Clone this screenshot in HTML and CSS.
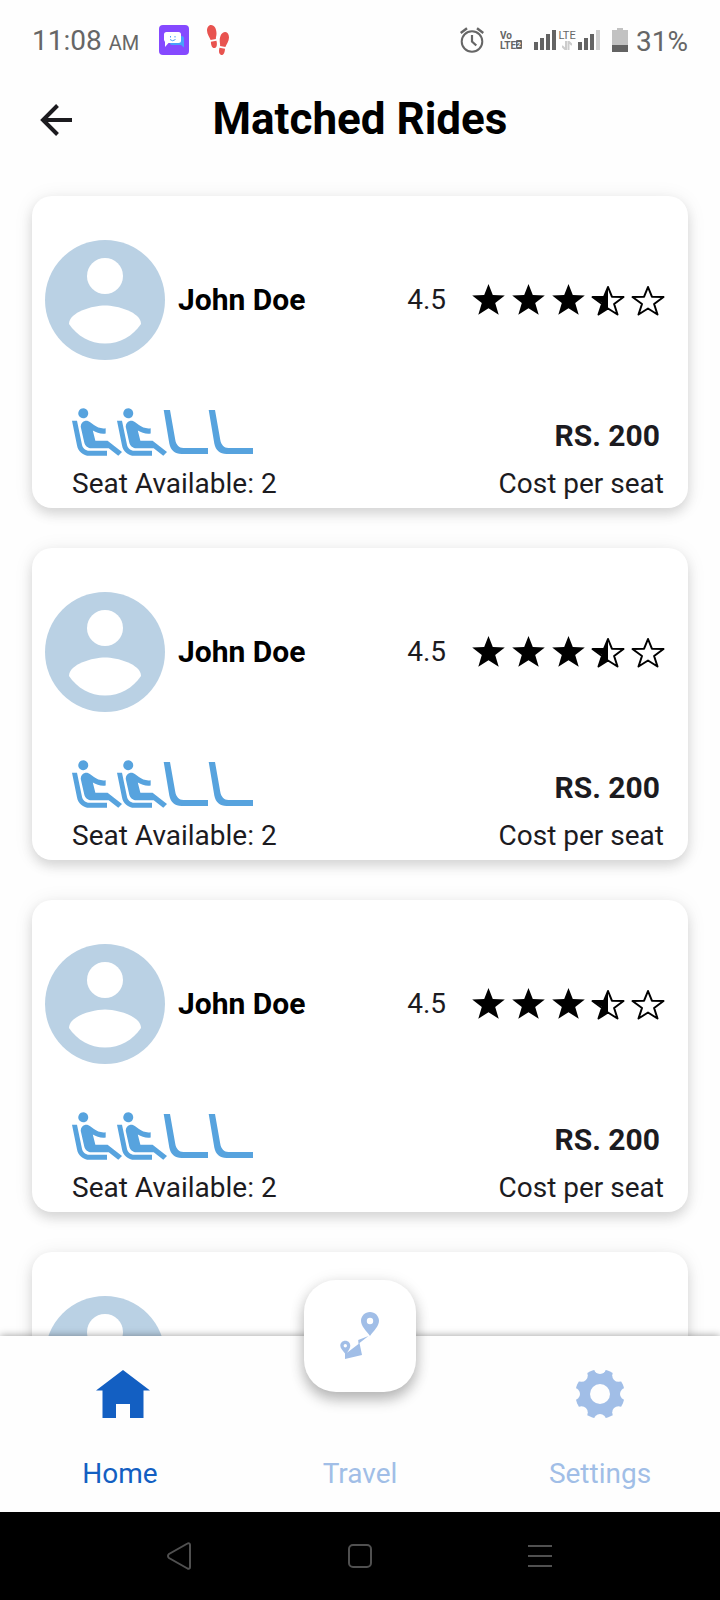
FILE: index.html
```
<!DOCTYPE html>
<html lang="en">
<head>
<meta charset="utf-8">
<meta name="viewport" content="width=device-width, initial-scale=1">
<title>Matched Rides</title>
<link rel="stylesheet" href="styles.css">
</head>
<body>
<svg class="defs" aria-hidden="true">
  <symbol id="avatar" viewBox="0 0 120 120">
    <circle class="avatar-bg" cx="60" cy="60" r="60"/>
    <circle class="avatar-fg" cx="60" cy="36" r="18"/>
    <path class="avatar-fg" d="M60 65.500c12 0 36 6.500 36 18.500-8 12-21 19.500-36 19.500S32 96 24 84C24 72 48 65.500 60 65.500z"/>
  </symbol>
  <symbol id="star" viewBox="0 0 40 40">
    <path d="M20.500 4l4.300 11 12 .4-9.600 7.600 3.500 11.700-10.200-6.400-10.200 6.400L13.800 23 4.200 15.400l12-.4z"/>
  </symbol>
  <symbol id="star-half" viewBox="0 0 40 40">
    <path d="M20 7v21.500L10.500 34.500 14 23 4.500 17l11.600-.3z"/>
    <path class="star-line" d="M20 7l3.900 9.700L35.500 17l-9.400 7 3.400 10.500L20 28.500 10.500 34.500 14 24 4.500 17l11.600-.3z"/>
  </symbol>
  <symbol id="star-empty" viewBox="0 0 40 40">
    <path class="star-line" d="M20 7l3.900 9.700L35.500 17l-9.400 7 3.400 10.500L20 28.500 10.500 34.500 14 24 4.500 17l11.600-.3z"/>
  </symbol>
  <symbol id="seat-taken" viewBox="2 2 20 19">
    <path d="M5.350 5.640c-.9-.64-1.120-1.880-.49-2.790.63-.9 1.880-1.120 2.790-.49.9.64 1.120 1.880.49 2.790-.64.9-1.880 1.120-2.790.49zM16 19H8.930c-1.480 0-2.740-1.080-2.960-2.540L4 7H2l1.990 9.760C4.370 19.200 6.470 21 8.940 21H16v-2zm.23-4h-4.880l-1.030-4.100c1.580.89 3.280 1.540 5.150 1.220V9.990c-1.630.31-3.440-.27-4.690-1.250L9.140 7.470c-.23-.18-.49-.3-.76-.38-.32-.09-.66-.12-.99-.06h-.02c-1.230.22-2.050 1.390-1.840 2.610l1.350 5.920C7.160 16.980 8.390 18 9.830 18h6.850l3.820 3 1.500-1.500-5.770-4.500z"/>
  </symbol>
  <symbol id="seat-free" viewBox="0 0 50 48">
    <path d="M1.700 2H8l5.300 30c.8 4.600 3.800 8 8 8H46v6H19.500C13 46 8.500 42 7.300 35.500z"/>
  </symbol>
</svg>

<div class="status">
  <div class="status-group status-left">
    <span class="clock">11:08 <small class="ampm">AM</small></span>
    <div class="apps">
      <svg width="30" height="30" viewBox="0 0 30 30" aria-hidden="true">
        <rect width="30" height="30" rx="4" fill="#8549ff"/>
        <path d="M11 11h11.500a2.500 2.500 0 0 1 2.500 2.500v9l-3-2.500h-9a2 2 0 0 1-2-2z" fill="#47a0fb"/>
        <path d="M7.500 7h12A2.500 2.500 0 0 1 22 9.500v6a2.500 2.500 0 0 1-2.500 2.500H9.500L6 22V17l-1-2V9.500A2.500 2.500 0 0 1 7.500 7z" fill="#fff"/>
        <path d="M11.500 11v1.500M16 11v1.500M11 14.500q2.500 2.500 5.500 0" fill="none" stroke="#4b9ff8"/>
      </svg>
      <svg width="22" height="30" viewBox="0 0 22 30" aria-hidden="true" fill="#e8534f">
        <path d="M4 0c3.500 0 5.500 4 5.500 8.500 0 2.500-.8 3.800-.6 5.500l-5.300 1C2.800 12.500 0 9.500 0 5.500 0 2.500 1.500 0 4 0z"/>
        <path d="M3.900 16.800l5.500-1.100c1 3.500.6 6.700-1.700 7.300-2.500.6-3.700-2.500-3.800-6.200z"/>
        <path d="M18.300 7C15 6.800 13 10.500 12.700 15c-.1 2.600.6 4 .4 6l5.300 1c.9-2.600 3.600-5.500 3.600-9.500 0-3-1.200-5.400-3.700-5.500z"/>
        <path d="M18 23.700l-5.500-1c-1 3.500-.6 6.700 1.600 7.200 2.500.5 3.700-2.500 3.900-6.200z"/>
      </svg>
    </div>
  </div>
  <div class="status-group status-right">
    <svg class="alarm" width="24" height="26" viewBox="0 0 24 26" aria-hidden="true" fill="none" stroke="#666" stroke-width="2">
      <circle cx="12" cy="14.500" r="10.300"/>
      <path d="M12 8v6.500l4.300 4" stroke-width="2.200"/>
      <path d="M.7 6L7 1.200M17 1.200L23.300 6" stroke-width="2.400"/>
    </svg>
    <svg width="22" height="20" viewBox="0 0 22 20" aria-label="VoLTE 2">
      <text class="volte-text" x="0" y="9">Vo</text>
      <text class="volte-text" x="0" y="19">LTE</text>
      <rect x="16" y="10" width="6" height="9" rx="1" fill="#666"/>
      <text class="volte-num" x="17" y="17">2</text>
    </svg>
    <div class="signals">
      <svg width="22" height="20" viewBox="0 0 22 20" aria-hidden="true" fill="#636363">
        <path d="M0 12h4v8H0zM6 8h4v12H6zM12 4h4v16h-4zM18 0h4v20h-4z"/>
      </svg>
      <span class="lte"><span class="lte-text">LTE</span>
        <svg width="10" height="9" viewBox="0 0 10 9" aria-hidden="true" fill="none" stroke="#ccc" stroke-width="2"><path d="M4 0v9M4 9L0 5M6.500 9V0M6 0l4 4"/></svg>
      </span>
      <svg width="22" height="20" viewBox="0 0 22 20" aria-hidden="true" fill="#636363">
        <path d="M0 12h4v8H0zM6 8h4v12H6zM12 4h4v16h-4z"/><path d="M18 0h4v20h-4z" fill="#cfcfcf"/>
      </svg>
    </div>
    <div class="power">
      <svg width="16" height="24" viewBox="0 0 16 24" aria-hidden="true">
        <path d="M5 0h6v2h5v15H0V2h5z" fill="#c2c2c2"/><path d="M0 17h16v7H0z" fill="#636363"/>
      </svg>
      <span class="clock">31%</span>
    </div>
  </div>
</div>

<header class="header">
  <button class="back" type="button" aria-label="Back">
    <svg width="32" height="32" viewBox="0 0 32 32" fill="none" stroke="#1c1b1f" stroke-width="4"><path d="M32 16H3M17.500 1.500L3 16l14.500 14.500"/></svg>
  </button>
  <h1 class="title">Matched Rides</h1>
</header>

<main class="rides">
  <article class="card">
    <div class="driver">
      <svg class="avatar" aria-hidden="true"><use href="#avatar"/></svg>
      <h2 class="name">John Doe</h2>
      <span class="score">4.5</span>
      <div class="stars" role="img" aria-label="Rating">
        <svg class="star"><use href="#star"/></svg><svg class="star"><use href="#star"/></svg><svg class="star"><use href="#star"/></svg><svg class="star"><use href="#star-half"/></svg><svg class="star"><use href="#star-empty"/></svg>
      </div>
    </div>
    <div class="details">
      <div class="seats">
        <div class="seat-row" aria-hidden="true">
          <svg class="seat"><use href="#seat-taken"/></svg><svg class="seat"><use href="#seat-taken"/></svg><svg class="seat"><use href="#seat-free"/></svg><svg class="seat"><use href="#seat-free"/></svg>
        </div>
        <p class="caption">Seat Available: 2</p>
      </div>
      <div class="cost">
        <p class="price">RS. 200</p>
        <p class="caption">Cost per seat</p>
      </div>
    </div>
  </article>
  <article class="card">
    <div class="driver">
      <svg class="avatar" aria-hidden="true"><use href="#avatar"/></svg>
      <h2 class="name">John Doe</h2>
      <span class="score">4.5</span>
      <div class="stars" role="img" aria-label="Rating">
        <svg class="star"><use href="#star"/></svg><svg class="star"><use href="#star"/></svg><svg class="star"><use href="#star"/></svg><svg class="star"><use href="#star-half"/></svg><svg class="star"><use href="#star-empty"/></svg>
      </div>
    </div>
    <div class="details">
      <div class="seats">
        <div class="seat-row" aria-hidden="true">
          <svg class="seat"><use href="#seat-taken"/></svg><svg class="seat"><use href="#seat-taken"/></svg><svg class="seat"><use href="#seat-free"/></svg><svg class="seat"><use href="#seat-free"/></svg>
        </div>
        <p class="caption">Seat Available: 2</p>
      </div>
      <div class="cost">
        <p class="price">RS. 200</p>
        <p class="caption">Cost per seat</p>
      </div>
    </div>
  </article>
  <article class="card">
    <div class="driver">
      <svg class="avatar" aria-hidden="true"><use href="#avatar"/></svg>
      <h2 class="name">John Doe</h2>
      <span class="score">4.5</span>
      <div class="stars" role="img" aria-label="Rating">
        <svg class="star"><use href="#star"/></svg><svg class="star"><use href="#star"/></svg><svg class="star"><use href="#star"/></svg><svg class="star"><use href="#star-half"/></svg><svg class="star"><use href="#star-empty"/></svg>
      </div>
    </div>
    <div class="details">
      <div class="seats">
        <div class="seat-row" aria-hidden="true">
          <svg class="seat"><use href="#seat-taken"/></svg><svg class="seat"><use href="#seat-taken"/></svg><svg class="seat"><use href="#seat-free"/></svg><svg class="seat"><use href="#seat-free"/></svg>
        </div>
        <p class="caption">Seat Available: 2</p>
      </div>
      <div class="cost">
        <p class="price">RS. 200</p>
        <p class="caption">Cost per seat</p>
      </div>
    </div>
  </article>
  <article class="card">
    <div class="driver">
      <svg class="avatar" aria-hidden="true"><use href="#avatar"/></svg>
    </div>
  </article>
</main>

<nav class="tabs">
  <a class="tab tab-active" href="#home">
    <svg class="tab-icon home-icon" viewBox="0 0 54 48" aria-hidden="true" fill="currentColor"><path d="M27 0l27 20.500h-6.500V48H34V34H20v14H6.500V20.500H0z"/></svg>
    <span>Home</span>
  </a>
  <a class="tab" href="#travel"><span>Travel</span></a>
  <a class="tab" href="#settings">
    <svg class="tab-icon" viewBox="0 0 48 48" aria-hidden="true">
      <mask id="gear">
        <circle cx="24" cy="24" r="24.700" fill="#fff"/>
        <g fill="#000">
          <circle cx="24" cy="24" r="10"/>
          <circle cx="24" cy="-2" r="6"/><circle cx="24" cy="50" r="6"/><circle cx="-2" cy="24" r="6"/><circle cx="50" cy="24" r="6"/>
          <circle cx="5.500" cy="5.500" r="6.300"/><circle cx="42.500" cy="5.500" r="6.300"/><circle cx="5.500" cy="42.500" r="6.300"/><circle cx="42.500" cy="42.500" r="6.300"/>
        </g>
      </mask>
      <rect width="48" height="48" fill="currentColor" mask="url(#gear)"/>
    </svg>
    <span>Settings</span>
  </a>
  <button class="fab" type="button" aria-label="Travel">
    <svg width="40" height="48" viewBox="0 0 40 48" fill="currentColor" fill-rule="evenodd">
      <path d="M30 0c5 0 9 4 9 8.800C39 14.500 33.500 19 30 24c-3.500-5-9-9.500-9-15.200C21 4 25 0 30 0zm0 5.800a3.200 3.200 0 1 0 0 6.400 3.200 3.200 0 0 0 0-6.400z"/>
      <path d="M5.300 28.700c3 0 5 2.300 5 5 0 2.400-1.600 4.600-3.300 7L18.500 32l-.3-4L28.500 24 19.500 31l2.500 12-17 4v-5.500C3 38.500.3 36.500.3 33.700c0-2.700 2-5 5-5zm0 3.300a1.700 1.700 0 1 0 0 3.400 1.700 1.700 0 0 0 0-3.400z"/>
    </svg>
  </button>
</nav>

<div class="system">
  <button class="key" type="button" aria-label="Back"><svg width="26" height="28" viewBox="0 0 26 28"><path d="M20.500 1.500c1-.7 2.500-.2 2.500 1.300v22.400c0 1.500-1.500 2-2.500 1.300L2 16c-1.300-1-1.300-3 0-4z"/></svg></button>
  <button class="key" type="button" aria-label="Home"><svg width="24" height="24" viewBox="0 0 24 24"><rect x="1" y="1" width="22" height="22" rx="4"/></svg></button>
  <button class="key" type="button" aria-label="Recent apps"><svg width="24" height="24" viewBox="0 0 24 24"><path d="M0 2h24M0 12h24M0 22h24"/></svg></button>
</div>
</body>
</html>
```
FILE: styles.css
```
* {
  box-sizing: border-box;
}

body {
  margin: 0;
  height: 100vh;
  display: flex;
  flex-direction: column;
  overflow: hidden;
  background: #fefefe;
  color: #1c1b1f;
  font-family: Roboto, "Liberation Sans", sans-serif;
  font-size: 28px;
  line-height: 40px;
}

h1,
h2,
p {
  margin: 0;
}

button {
  padding: 0;
  border: 0;
  background: none;
  color: inherit;
  cursor: pointer;
}

svg {
  display: block;
  flex: none;
}

.defs {
  position: absolute;
  width: 0;
  height: 0;
}

/* Status bar */
.status {
  display: flex;
  justify-content: space-between;
  align-items: center;
  height: 80px;
  padding: 0 32px;
  color: #666;
}

.status-group,
.apps,
.signals,
.power {
  display: flex;
  align-items: center;
}

.status-left {
  gap: 20px;
}

.apps {
  gap: 18px;
}

.clock {
  padding-top: 4px;
}

.ampm {
  font-size: 20px;
}

.status-right {
  gap: 12px;
}

.alarm {
  margin-right: 4px;
}

.lte {
  display: flex;
  flex-direction: column;
  align-items: center;
  width: 22px;
}

.lte-text {
  font-size: 11px;
  line-height: 11px;
}

.volte-text {
  fill: #666;
  font-size: 10px;
  font-weight: 700;
}

.volte-num {
  fill: #fff;
  font-size: 7px;
  font-weight: 700;
}

.power {
  gap: 8px;
}

/* Header */
.header {
  display: grid;
  grid-template-columns: 48px 1fr 48px;
  align-items: center;
  height: 80px;
  padding: 0 32px;
}

.back {
  display: grid;
  place-items: center;
  height: 48px;
}

.title {
  padding-bottom: 2px;
  color: #000;
  font-size: 44px;
  line-height: 56px;
  font-weight: 700;
  text-align: center;
}

/* Ride list */
.rides {
  flex: 1;
  min-height: 0;
  display: flex;
  flex-direction: column;
  gap: 40px;
  padding: 36px 32px;
  overflow-y: auto;
  scrollbar-width: none;
}

.card {
  flex: none;
  padding: 44px 20px 4px 13px;
  border-radius: 20px;
  background: #fff;
  box-shadow: 0 6px 12px rgba(0, 0, 0, 0.12), 0 2px 20px rgba(0, 0, 0, 0.08);
}

.driver {
  display: flex;
  align-items: center;
}

.avatar {
  width: 120px;
  height: 120px;
}

.avatar-bg {
  fill: #bad1e4;
}

.avatar-fg {
  fill: #fff;
}

.name {
  flex: 1;
  margin-left: 13px;
  color: #000;
  font-size: 30px;
  font-weight: 700;
}

.score {
  margin-right: 22px;
}

.stars {
  display: flex;
}

.star {
  width: 40px;
  height: 40px;
}

.star-line {
  fill: none;
  stroke: #000;
  stroke-width: 2;
  stroke-linejoin: round;
}

.details {
  display: flex;
  justify-content: space-between;
  align-items: flex-end;
  padding: 48px 4px 0 27px;
}

.seat-row {
  display: flex;
  margin-bottom: 8px;
  fill: #57a3de;
}

.seat {
  width: 50px;
  height: 48px;
  margin-right: -5px;
}

.cost {
  text-align: right;
}

.price {
  margin-bottom: 8px;
  padding-right: 4px;
  font-size: 30px;
  font-weight: 700;
}

/* Bottom tabs */
.tabs {
  position: relative;
  z-index: 1;
  display: grid;
  grid-template-columns: repeat(3, 1fr);
  height: 176px;
  padding: 0 0 18px;
  background: #fefefe;
  box-shadow: 0 0 8px rgba(0, 0, 0, 0.4);
}

.tab {
  display: flex;
  flex-direction: column;
  align-items: center;
  justify-content: flex-end;
  gap: 36px;
  color: #a1bee7;
  text-decoration: none;
}

.tab-active {
  color: #135fc2;
}

.tab-icon {
  width: 48px;
  height: 48px;
}

.home-icon {
  width: 54px;
  margin-left: 6px;
}

.fab {
  position: absolute;
  top: -56px;
  left: calc(50% - 56px);
  display: grid;
  place-items: center;
  width: 112px;
  height: 112px;
  border-radius: 32px;
  background: #fff;
  color: #a1bee7;
  box-shadow: 0 8px 14px rgba(0, 0, 0, 0.24), 0 2px 16px rgba(0, 0, 0, 0.1);
}

/* System keys */
.system {
  position: relative;
  z-index: 2;
  display: flex;
  justify-content: center;
  gap: 100px;
  height: 88px;
  background: #000;
}

.key {
  display: grid;
  place-items: center;
  width: 80px;
}

.key svg {
  fill: none;
  stroke: #505050;
  stroke-width: 2;
}
```
